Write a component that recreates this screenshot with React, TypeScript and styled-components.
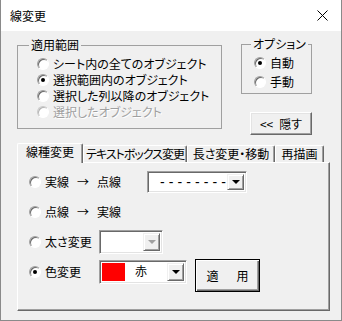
import styled, { createGlobalStyle } from "styled-components";

const GlobalStyle = createGlobalStyle`
  html, body {
    margin: 0;
    padding: 0;
    background: #ffffff;
  }
  body {
    font-family: "Noto Sans CJK JP", "Noto Sans", sans-serif;
    font-size: 12px;
    font-feature-settings: "palt";
    color: #000;
  }
  * {
    box-sizing: border-box;
  }
`;

const Window = styled.div`
  width: 342px;
  height: 321px;
  display: flex;
  flex-direction: column;
  border: 1px solid #8a8a8a;
  border-top: none;
  background: #f0f0f0;
`;

const TitleBar = styled.div`
  height: 31px;
  flex: none;
  display: flex;
  align-items: center;
  justify-content: space-between;
  padding: 0 13px 0 9px;
  background: #ffffff;
  font-size: 12px;
  line-height: 14px;
`;

const Body = styled.div`
  display: flex;
  flex-direction: column;
  padding: 6px 0 0 16px;
`;

const TopRow = styled.div`
  display: flex;
  align-items: flex-start;
  gap: 19px;
`;

const GroupBox = styled.fieldset<{ $width: number; $height: number; $padLeft: number; $padTop: number; $top?: number }>`
  margin: ${({ $top }) => $top ?? 0}px 0 0 0;
  width: ${({ $width }) => $width}px;
  height: ${({ $height }) => $height}px;
  padding: ${({ $padTop }) => $padTop}px 0 0 ${({ $padLeft }) => $padLeft}px;
  border: 1px solid #a0a0a0;
  display: flex;
  flex-direction: column;
  min-width: 0;
`;

const Legend = styled.legend<{ $shift: number }>`
  padding: 0 2px;
  margin-left: ${({ $shift }) => $shift}px;
  height: 14px;
  line-height: 14px;
  font-size: 12px;
`;

const RightColumn = styled.div`
  display: flex;
  flex-direction: column;
  align-items: flex-end;
  width: 71px;
`;

const ClassicButton = styled.button<{ $width: number; $height: number; $default?: boolean }>`
  width: ${({ $width }) => $width}px;
  height: ${({ $height }) => $height}px;
  padding: 0;
  margin: 0;
  font-family: inherit;
  font-size: 12px;
  font-feature-settings: "palt";
  color: #000;
  background: #f0f0f0;
  display: flex;
  align-items: center;
  justify-content: center;
  border: 1px solid;
  border-color: ${({ $default }) => ($default ? "#000" : "#fff #696969 #696969 #fff")};
  box-shadow: ${({ $default }) =>
    $default
      ? "inset 1px 1px 0 #fff, inset -1px -1px 0 #696969, inset -2px -2px 0 #a0a0a0"
      : "inset -1px -1px 0 #a0a0a0, inset 1px 1px 0 #e3e3e3"};
`;

const HideButton = styled(ClassicButton)`
  margin-top: 18px;
  gap: 6px;
`;

const ApplyButton = styled(ClassicButton)`
  align-self: flex-start;
  margin: 2px 0 0 8px;
  letter-spacing: 3px;
  padding-left: 3px;
`;

const RadioRow = styled.label<{ $height: number; $disabled?: boolean }>`
  display: flex;
  align-items: center;
  gap: 4px;
  height: ${({ $height }) => $height}px;
  color: ${({ $disabled }) => ($disabled ? "#a0a0a0" : "#000")};
  text-shadow: ${({ $disabled }) => ($disabled ? "1px 1px 0 #fff" : "none")};
  white-space: nowrap;
  line-height: 14px;
`;

const RadioCircle = styled.span<{ $checked?: boolean; $disabled?: boolean }>`
  flex: none;
  position: relative;
  width: 12px;
  height: 12px;
  border-radius: 50%;
  background: #fff;
  border: 1px solid;
  border-color: ${({ $disabled }) =>
    $disabled ? "#c8c8c8 #fff #fff #c8c8c8" : "#a0a0a0 #fff #fff #a0a0a0"};
  box-shadow: ${({ $disabled }) =>
    $disabled ? "inset 1px 1px 0 #b4b4b4" : "inset 1px 1px 0 #696969"};

  &::after {
    content: "";
    display: ${({ $checked }) => ($checked ? "block" : "none")};
    position: absolute;
    left: 3px;
    top: 3px;
    width: 4px;
    height: 4px;
    border-radius: 50%;
    background: #000;
  }
`;

const TabStrip = styled.div`
  display: flex;
  align-items: flex-end;
  height: 19px;
  margin-top: 8px;
`;

const Tab = styled.div<{ $width: number; $active?: boolean; $spacing?: number }>`
  width: ${({ $width }) => $width}px;
  height: ${({ $active }) => ($active ? 20 : 17)}px;
  margin-bottom: ${({ $active }) => ($active ? -1 : 0)}px;
  position: relative;
  z-index: ${({ $active }) => ($active ? 1 : 0)};
  display: flex;
  align-items: center;
  justify-content: center;
  padding-bottom: ${({ $active }) => ($active ? 3 : 0)}px;
  background: #f0f0f0;
  border-top: 1px solid #fff;
  border-left: 1px solid #fff;
  border-right: 1px solid #696969;
  border-radius: 2px 2px 0 0;
  box-shadow: inset -1px 0 0 #a0a0a0;
  font-size: 12px;
  line-height: 14px;
  letter-spacing: ${({ $spacing }) => $spacing ?? 0}px;
  white-space: nowrap;
`;

const TabPanel = styled.div`
  width: 313px;
  height: 149px;
  display: flex;
  flex-direction: column;
  padding: 4px 0 0 11px;
  border-top: 1px solid #fff;
  border-left: 1px solid #fff;
  border-right: 1px solid #696969;
  border-bottom: 1px solid #696969;
  box-shadow: inset -1px -1px 0 #a0a0a0;
`;

const OptionRow = styled.div`
  display: flex;
  align-items: center;
  height: 30px;
`;

const OptionLabel = styled(RadioRow)<{ $width: number }>`
  width: ${({ $width }) => $width}px;
  flex: none;
`;

const Words = styled.span`
  display: inline-flex;
  gap: 8px;
`;

const ComboBox = styled.div<{ $width: number; $height: number }>`
  width: ${({ $width }) => $width}px;
  height: ${({ $height }) => $height}px;
  display: flex;
  background: #fff;
  border: 1px solid;
  border-color: #a0a0a0 #fff #fff #a0a0a0;
  box-shadow: inset 1px 1px 0 #696969, inset -1px -1px 0 #e3e3e3;
  padding: 2px;
`;

const ComboValue = styled.div<{ $mono?: boolean }>`
  flex: 1;
  display: flex;
  align-items: ${({ $mono }) => ($mono ? "center" : "flex-start")};
  padding-left: ${({ $mono }) => ($mono ? 10 : 9)}px;
  font-family: ${({ $mono }) => ($mono ? '"Liberation Sans", sans-serif' : "inherit")};
  font-size: ${({ $mono }) => ($mono ? 14 : 12)}px;
  letter-spacing: ${({ $mono }) => ($mono ? "0.1px" : "0")};
  line-height: 16px;
  white-space: nowrap;
`;

const Swatch = styled.div<{ $color: string }>`
  width: 23px;
  flex: none;
  margin: 0 1px 0 0;
  background: ${({ $color }) => $color};
`;

const ArrowButton = styled.div<{ $disabled?: boolean }>`
  width: 17px;
  flex: none;
  display: flex;
  align-items: center;
  justify-content: center;
  background: #f0f0f0;
  border: 1px solid;
  border-color: #f0f0f0 #696969 #696969 #f0f0f0;
  box-shadow: inset 1px 1px 0 #fff, inset -1px -1px 0 #a0a0a0;

  &::after {
    content: "";
    width: 0;
    height: 0;
    border-left: 4px solid transparent;
    border-right: 4px solid transparent;
    border-top: 4px solid ${({ $disabled }) => ($disabled ? "#a0a0a0" : "#000")};
  }
`;

const CloseIcon = () => (
  <svg width="11" height="11" viewBox="0 0 11 11">
    <path d="M0.5 0.5 L10.5 10.5 M10.5 0.5 L0.5 10.5" stroke="#000" strokeWidth="1" />
  </svg>
);

type RadioProps = {
  label: string;
  checked?: boolean;
  disabled?: boolean;
  height: number;
};

const Radio = ({ label, checked, disabled, height }: RadioProps) => (
  <RadioRow $height={height} $disabled={disabled}>
    <RadioCircle $checked={checked} $disabled={disabled} />
    <span>{label}</span>
  </RadioRow>
);

const scopeOptions = [
  { label: "シート内の全てのオブジェクト" },
  { label: "選択範囲内のオブジェクト", checked: true },
  { label: "選択した列以降のオブジェクト" },
  { label: "選択したオブジェクト", disabled: true },
];

const tabs = [
  { label: "線種変更", width: 66, active: true },
  { label: "テキストボックス変更", width: 104, spacing: -1 },
  { label: "長さ変更・移動", width: 88 },
  { label: "再描画", width: 49 },
];

export default function App() {
  return (
    <>
      <GlobalStyle />
      <Window>
        <TitleBar>
          <span>線変更</span>
          <CloseIcon />
        </TitleBar>
        <Body>
          <TopRow>
            <GroupBox $width={205} $height={91} $padLeft={19} $padTop={4} $top={1}>
              <Legend $shift={-8}>適用範囲</Legend>
              {scopeOptions.map((o) => (
                <Radio key={o.label} label={o.label} checked={o.checked} disabled={o.disabled} height={16} />
              ))}
            </GroupBox>
            <RightColumn>
              <GroupBox $width={71} $height={57} $padLeft={12} $padTop={2}>
                <Legend $shift={-3}>オプション</Legend>
                <Radio label="自動" checked height={19} />
                <Radio label="手動" height={19} />
              </GroupBox>
              <HideButton $width={62} $height={23}>
                <span>&lt;&lt;</span>
                <span>隠す</span>
              </HideButton>
            </RightColumn>
          </TopRow>

          <TabStrip>
            {tabs.map((t) => (
              <Tab key={t.label} $width={t.width} $active={t.active} $spacing={t.spacing}>
                {t.label}
              </Tab>
            ))}
          </TabStrip>
          <TabPanel>
            <OptionRow>
              <OptionLabel $width={118} $height={24}>
                <RadioCircle />
                <Words>
                  <span>実線</span>
                  <span>→</span>
                  <span>点線</span>
                </Words>
              </OptionLabel>
              <ComboBox $width={100} $height={22}>
                <ComboValue $mono>- - - - - - - -</ComboValue>
                <ArrowButton />
              </ComboBox>
            </OptionRow>
            <OptionRow>
              <OptionLabel $width={118} $height={24}>
                <RadioCircle />
                <Words>
                  <span>点線</span>
                  <span>→</span>
                  <span>実線</span>
                </Words>
              </OptionLabel>
            </OptionRow>
            <OptionRow>
              <OptionLabel $width={70} $height={24}>
                <RadioCircle />
                <span>太さ変更</span>
              </OptionLabel>
              <ComboBox $width={64} $height={24}>
                <ComboValue />
                <ArrowButton $disabled />
              </ComboBox>
            </OptionRow>
            <OptionRow>
              <OptionLabel $width={70} $height={24}>
                <RadioCircle $checked />
                <span>色変更</span>
              </OptionLabel>
              <ComboBox $width={88} $height={24}>
                <Swatch $color="#ff0000" />
                <ComboValue>赤</ComboValue>
                <ArrowButton />
              </ComboBox>
              <ApplyButton $width={65} $height={33} $default>
                適　用
              </ApplyButton>
            </OptionRow>
          </TabPanel>
        </Body>
      </Window>
    </>
  );
}
